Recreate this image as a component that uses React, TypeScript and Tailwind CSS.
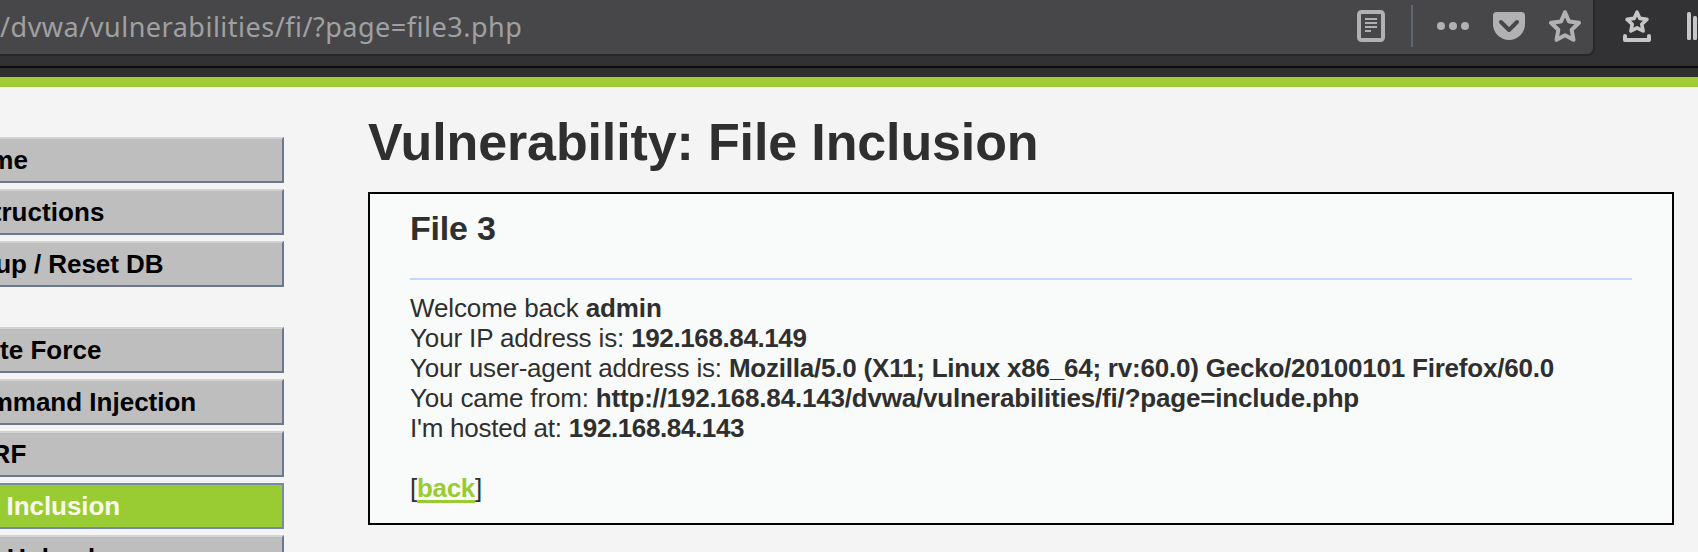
const groups = [
  [
    { name: 'Home', tracking: 'tracking-[0.25px]' },
    { name: 'Instructions', tracking: 'tracking-[0.05px]' },
    { name: 'Setup / Reset DB', tracking: 'tracking-[-0.07px]' },
  ],
  [
    { name: 'Brute Force', tracking: 'tracking-[0.05px]' },
    { name: 'Command Injection', tracking: 'tracking-normal' },
    { name: 'CSRF', tracking: 'tracking-[0.2px]' },
    { name: 'File Inclusion', tracking: 'tracking-[-0.08px]' },
    { name: 'File Upload', tracking: 'tracking-normal' },
  ],
];

const details = [
  { label: 'Welcome back', value: 'admin', labelTracking: 'tracking-[-0.12px]', valueTracking: 'tracking-[-0.1px]' },
  { label: 'Your IP address is:', value: '192.168.84.149', labelTracking: 'tracking-[-0.14px]', valueTracking: 'tracking-[-0.39px]' },
  {
    label: 'Your user-agent address is:',
    value: 'Mozilla/5.0 (X11; Linux x86_64; rv:60.0) Gecko/20100101 Firefox/60.0',
    labelTracking: 'tracking-[-0.19px]',
    valueTracking: 'tracking-[-0.215px]',
  },
  {
    label: 'You came from:',
    value: 'http://192.168.84.143/dvwa/vulnerabilities/fi/?page=include.php',
    labelTracking: 'tracking-[-0.17px]',
    valueTracking: 'tracking-[-0.19px]',
  },
  { label: "I'm hosted at:", value: '192.168.84.143', labelTracking: 'tracking-[-0.25px]', valueTracking: 'tracking-[-0.39px]' },
];

function ReaderIcon() {
  return (
    <svg className="h-8 w-7 shrink-0" viewBox="0 0 28 32">
      <rect x="2" y="2" width="24" height="28" rx="2.5" fill="none" stroke="#b1b1b3" strokeWidth="4" />
      <path d="M8 9h12M8 13h12M8 17h12M8 21h6" stroke="#b1b1b3" strokeWidth="2" />
    </svg>
  );
}

function DotsIcon() {
  return (
    <svg className="h-8 w-8 shrink-0" viewBox="0 0 32 32" fill="#b1b1b3">
      <circle cx="4" cy="16" r="4" />
      <circle cx="16" cy="16" r="4" />
      <circle cx="28" cy="16" r="4" />
    </svg>
  );
}

function PocketIcon() {
  return (
    <svg className="h-8 w-8 shrink-0" viewBox="0 0 32 32">
      <path d="M3.500 2h25A3.500 3.500 0 0 1 32 5.500V14a16 16 0 0 1-32 0V5.500A3.500 3.500 0 0 1 3.500 2z" fill="#b1b1b3" />
      <path d="M8 12l8 8 8-8" fill="none" stroke="#474749" strokeWidth="4" strokeLinecap="round" strokeLinejoin="round" />
    </svg>
  );
}

function StarIcon() {
  return (
    <svg className="h-8 w-8 shrink-0" viewBox="0 0 32 32">
      <path
        d="M16 2.200l4 9.300 10 1.300-7.300 7 1.800 10L16 25.300 7.500 29.800l1.800-10-7.300-7 10-1.300z"
        fill="none" stroke="#b1b1b3" strokeWidth="4" strokeLinejoin="round"
      />
    </svg>
  );
}

function BookmarksTrayIcon() {
  return (
    <svg className="h-8 w-7 shrink-0" viewBox="0 0 28 32" fill="none" stroke="#c6c6c7" strokeLinejoin="round">
      <path d="M14 2.200l2.900 6.200 7 1-5.100 4.900 1.300 6.700-6.100-3.200-6.100 3.200 1.300-6.700-5.100-4.900 7-1z" strokeWidth="3.600" />
      <path d="M2 26v4h24v-4" strokeWidth="4" strokeLinecap="round" />
    </svg>
  );
}

function LibraryIcon() {
  return (
    <svg className="h-8 w-[11px] shrink-0" viewBox="0 0 11 32" fill="#c6c6c7">
      <rect x="0" y="2" width="4" height="28" rx="1.500" />
      <rect x="6" y="6" width="4" height="24" rx="1.500" />
    </svg>
  );
}

export default function App() {
  return (
    <div className="flex h-[552px] w-[1698px] flex-col overflow-hidden bg-[#f4f4f4] font-['Liberation_Sans',Arial,sans-serif] text-[26px] leading-[30px] text-[#2f2f2f]">
      <div className="flex h-[66px] shrink-0 items-start bg-[#323234]">
        <div className="flex h-14 w-[1595px] shrink-0 items-start rounded-br-lg border-r-2 border-b-2 border-[#28282a] bg-[#474749]">
          <div className="w-[1357px] shrink-0 pt-2 font-['Noto_Sans',sans-serif] text-[27px] leading-[38px] tracking-[0.5px] whitespace-nowrap text-[#a0a0a2] [font-variant-ligatures:none]">
            /dvwa/vulnerabilities/fi/?page=file3.php
          </div>
          <div className="flex items-start pt-[5px]">
            <div className="pt-[5px]"><ReaderIcon /></div>
            <div className="ml-[26px] h-[42px] w-0.5 bg-[#5f6773]" />
            <div className="ml-6 flex gap-6 pt-[5px]">
              <DotsIcon />
              <PocketIcon />
              <StarIcon />
            </div>
          </div>
        </div>
        <div className="ml-7 flex gap-9 pt-2.5">
          <BookmarksTrayIcon />
          <LibraryIcon />
        </div>
      </div>
      <div className="h-0.5 shrink-0 bg-[#0c0c0d]" />
      <header className="h-[19px] shrink-0 border-b-10 border-[#a1cc33] bg-[#2f2f2f]" />

      <div className="flex min-h-0 flex-1 items-start">
        <nav className="-ml-[58px] flex w-[342px] shrink-0 flex-col gap-10 pt-[50px]">
          {groups.map((items) => (
            <ul key={items[0].name} className="flex flex-col gap-1.5">
              {items.map((item) => (
                <li
                  key={item.name}
                  className={
                    item.name === 'File Inclusion'
                      ? 'h-[46px] border-2 border-[#778ba8] bg-[#99cc33] pt-[6px] pl-[11px] font-bold whitespace-nowrap text-[#fbf9ea]'
                      : 'h-[46px] border-2 border-t-[#d2d2d2] border-r-[#6b788e] border-b-[#6b788e] border-l-[#d2d2d2] bg-[#bebebe] pt-[6px] pl-[11px] font-bold whitespace-nowrap text-black'
                  }
                >
                  <span className={item.tracking}>{item.name}</span>
                </li>
              ))}
            </ul>
          ))}
        </nav>

        <main className="ml-[84px] w-[1306px] shrink-0 pt-[25px]">
          <h1 className="h-20 text-[52px] leading-[60px] font-bold tracking-[-0.13px]">Vulnerability: File Inclusion</h1>
          <section className="h-[333px] border-2 border-black bg-[#f9fbfa] px-10 pt-[14px]">
            <h2 className="h-[70px] text-[34px] leading-[40px] font-bold tracking-[-0.2px]">File 3</h2>
            <div className="h-0.5 bg-[#c4d8ff]" />
            <div className="pt-[13px] whitespace-nowrap">
              {details.map((row) => (
                <p key={row.label}>
                  <span className={row.labelTracking}>{row.label} </span>
                  <strong className={row.valueTracking}>{row.value}</strong>
                </p>
              ))}
              <p className="pt-[30px] tracking-[-0.3px]">
                [<a className="font-bold text-[#99cc33] underline decoration-[3px] underline-offset-[3px] [text-decoration-skip-ink:none]">back</a>]
              </p>
            </div>
          </section>
        </main>
      </div>
    </div>
  );
}
